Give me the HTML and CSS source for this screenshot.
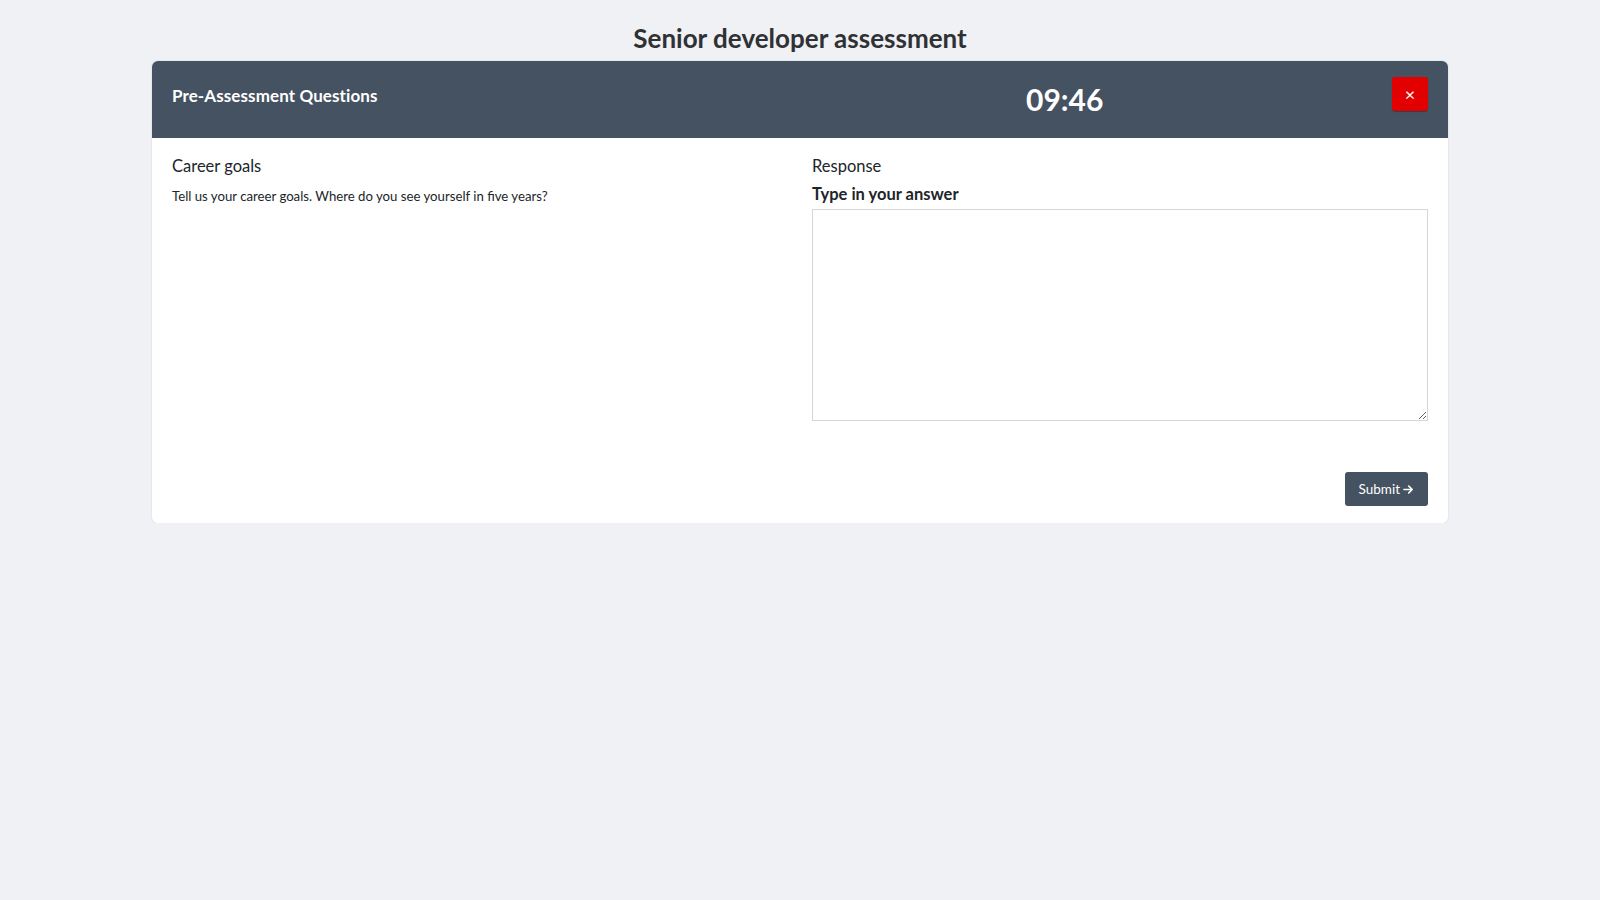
FILE: index.html
```html
<!DOCTYPE html>
<html lang="en">
<head>
<meta charset="utf-8">
<title>Senior developer assessment</title>
<link rel="stylesheet" href="styles.css">
</head>
<body>
<main class="page">
  <h1 class="page-title">Senior developer assessment</h1>
  <section class="card">
    <header class="card-header">
      <h2 class="card-title">Pre-Assessment Questions</h2>
      <div class="timer">09:46</div>
      <button class="close-btn" type="button" aria-label="Close">×</button>
    </header>
    <div class="card-body">
      <div class="cols">
        <div class="col">
          <h3 class="q-title">Career goals</h3>
          <p class="q-text">Tell us your career goals. Where do you see yourself in five years?</p>
        </div>
        <div class="col">
          <h3 class="q-title">Response</h3>
          <label class="answer-label" for="answer">Type in your answer</label>
          <textarea id="answer" class="answer"></textarea>
        </div>
      </div>
      <div class="actions">
        <button class="submit-btn" type="button">Submit <svg class="arrow" viewBox="0 0 12 12" width="11" height="11"><path d="M1 6h9M6.2 2.2L10 6l-3.8 3.8" fill="none" stroke="#fff" stroke-width="1.8" stroke-linecap="round" stroke-linejoin="round"/></svg></button>
      </div>
    </div>
  </section>
</main>
</body>
</html>
```

FILE: styles.css
```css
* { box-sizing: border-box; }
html, body { margin: 0; padding: 0; }
body {
  background: #eff1f4;
  font-family: Lato, "Noto Sans", sans-serif;
  color: #212529;
}
.page {
  width: 1296px;
  margin: 0 auto;
  padding-top: 22px;
}
.page-title {
  margin: 0 0 6px;
  text-align: center;
  font-size: 26px;
  line-height: 33px;
  font-weight: 700;
  color: #2f3134;
}
.card {
  background: #fff;
  border-radius: 6px;
  overflow: hidden;
  box-shadow: 0 0 0 1px #e6e8ec;
}
.card-header {
  height: 77px;
  background: #455261;
  display: flex;
  align-items: flex-start;
  padding: 0 20px;
}
.card-title {
  margin: 25px 0 0;
  flex: 0 0 614px;
  font-size: 17px;
  line-height: 20px;
  font-weight: 700;
  color: #fff;
  letter-spacing: 0.1px;
}
.timer {
  flex: 1;
  margin-top: 20px;
  font-size: 30px;
  line-height: 36px;
  font-weight: 700;
  color: #fff;
  padding-left: 240px;
}
.close-btn {
  width: 36px;
  height: 34px;
  margin-top: 16px;
  border: 0;
  border-radius: 3px;
  background: #e30000;
  color: #fff;
  font-size: 18px;
  line-height: 34px;
  padding: 0;
  font-family: Lato, sans-serif;
  box-shadow: 0 1px 1px rgba(0,0,0,0.25);
}
.card-body {
  padding: 16px 20px 17px;
}
.cols {
  display: grid;
  grid-template-columns: 1fr 1fr;
  column-gap: 24px;
}
.q-title {
  margin: 0;
  font-size: 16.5px;
  line-height: 24px;
  font-weight: 400;
  color: #212529;
}
.q-text {
  margin: 9px 0 0;
  font-size: 13.2px;
  line-height: 18px;
  color: #212529;
}
.answer-label {
  display: block;
  margin-top: 6px;
  font-size: 16.5px;
  line-height: 21px;
  font-weight: 700;
  color: #212529;
}
.answer {
  display: block;
  width: 100%;
  height: 212px;
  margin-top: 4px;
  border: 1px solid #d4d7dc;
  border-radius: 0;
  resize: vertical;
  font-family: inherit;
}
.actions {
  display: flex;
  justify-content: flex-end;
  margin-top: 51px;
}
.submit-btn {
  height: 34px;
  padding: 0 14px 0 14px;
  border: 0;
  border-radius: 3px;
  background: #455261;
  color: #fff;
  font-family: Lato, "Noto Sans", sans-serif;
  font-size: 13.5px;
  display: inline-flex;
  align-items: center;
  gap: 3px;
}
.arrow { display: block; }
```
